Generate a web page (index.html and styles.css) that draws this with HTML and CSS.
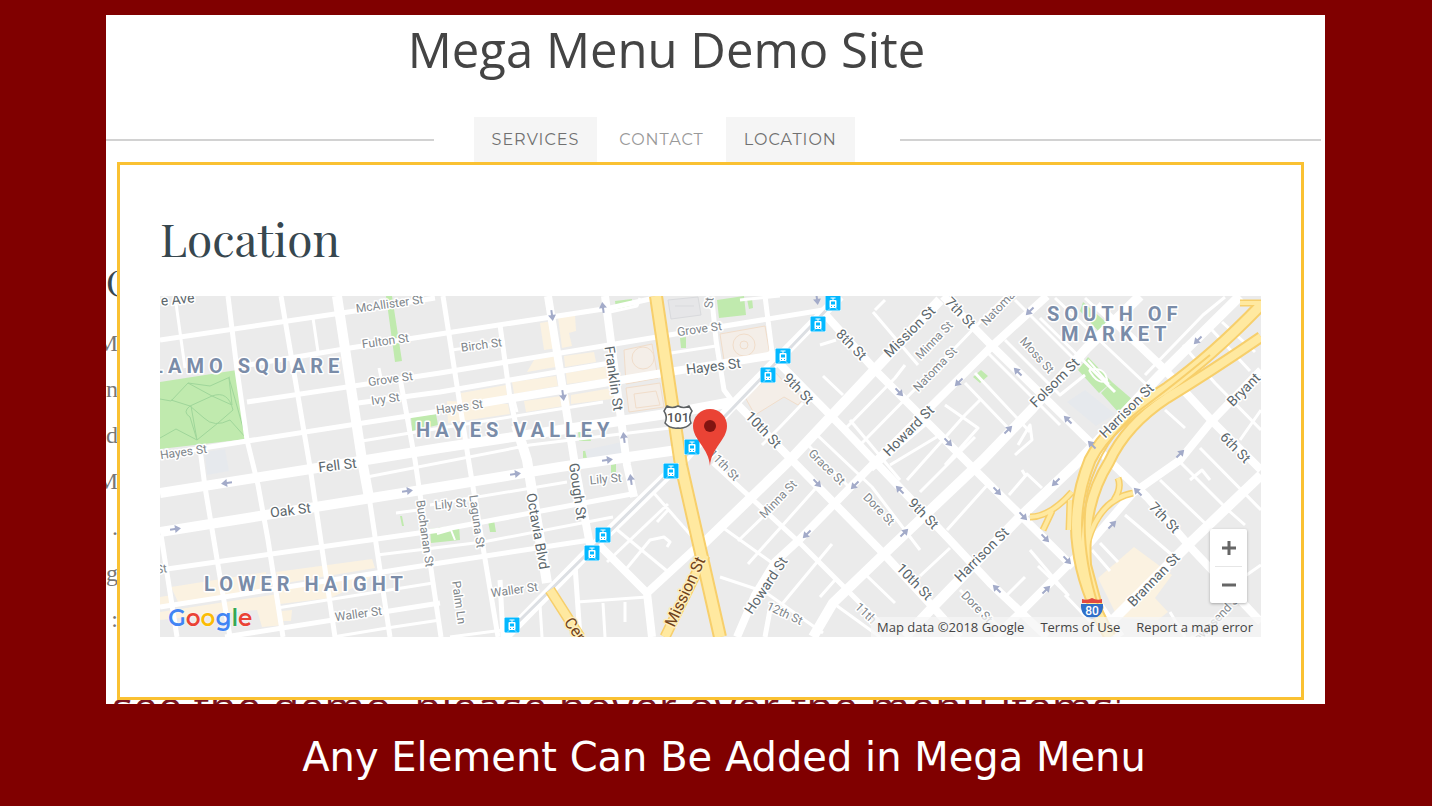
FILE: index.html
```html
<!DOCTYPE html>
<html lang="en">
<head>
    <meta charset="UTF-8">
    <meta name="viewport" content="width=device-width, initial-scale=1.0">
    <title>Mega Menu Demo Site</title>
    <link rel="stylesheet" href="styles.css">
</head>
<body>
    <div class="site">
        <header class="site-header">
            <h1 class="site-title">Mega Menu Demo Site</h1>
            <div class="nav-row">
                <span class="nav-line nav-line-left"></span>
                <nav class="nav">
                    <a href="#" class="nav-link active">SERVICES</a>
                    <a href="#" class="nav-link">CONTACT</a>
                    <a href="#" class="nav-link active">LOCATION</a>
                </nav>
                <span class="nav-line nav-line-right"></span>
            </div>
        </header>
        <main class="page-content">
            <div class="side-text">
                <h3>C</h3>
                <p>M</p>
                <p>n</p>
                <p>d</p>
                <p>M</p>
                <p>.</p>
                <p>g</p>
                <p>e :</p>
            </div>
            <p class="hint">see the demo, please hover over the menu items'</p>
        </main>
        <section class="mega-menu">
            <h2 class="mega-title">Location</h2>
            <div class="map">
                <svg class="map-canvas" viewBox="160 296 1101 341" role="img" aria-label="Map">
                    <defs>
                        <g id="tram">
                            <rect x="-8" y="-8" width="16" height="16" rx="1" fill="#fff"/>
                            <rect x="-7.5" y="-7.5" width="15" height="15" rx="1" fill="#03b8ff"/>
                            <path d="M-2.5 -5H2.5M0 -5V-3" stroke="#fff" fill="none"/>
                            <rect x="-3.5" y="-3" width="7" height="8" rx="1" fill="#fff"/>
                            <rect x="-2" y="-1.5" width="4" height="3" fill="#03b8ff"/>
                            <path d="M-2 3.5H-1M1 3.5H2" stroke="#03b8ff"/>
                            <path d="M-3 5.5L-4 6.5M3 5.5L4 6.5" stroke="#fff"/>
                        </g>
                        <path id="arrow" d="M-5 -1H0V-4L6 0L0 4V1H-5Z" fill="#a3abc9"/>
                    </defs>

                    <rect x="160" y="296" width="1101" height="341" fill="#ebebeb"/>

                    <!-- shops, parks and public buildings -->
                    <g fill="#fbf2e1">
                        <path d="M171 587L266 572L266 592L179 604ZM160 597L172 595V606L160 608ZM160 612L278 594L284 625L262 627L257 610L160 620Z"/>
                        <path d="M276 572L372 559L375 568L280 584ZM279 589L373 574L366 582L330 598L280 604ZM282 611L292 610L291 621L282 621Z"/>
                        <path d="M540 323L552 321L557 348L544 350ZM558 317L575 315L576 331L569 333L572 346L562 348Z"/>
                        <path d="M534 360L554 356L556 367L527 372ZM564 356L594 352L596 362L565 367ZM566 373L610 366L612 378L567 384ZM512 382L556 376L558 386L514 394ZM461 393L506 385L507 395L462 405ZM571 395L618 387L620 398L571 404ZM524 401L569 395L570 405L526 412ZM447 401L508 404L510 414L448 423Z"/>
                        <path d="M1134 547L1172 575L1155 598L1168 612L1158 620L1118 618L1098 578Z"/>
                    </g>
                    <g fill="#f4eee8" stroke="#f1ddca">
                        <path d="M624 350L652 344L658 378L626 384ZM626 388L660 383L664 407L629 412ZM634 394L656 391L660 405L636 408Z"/>
                        <circle cx="643" cy="358" r="11"/>
                        <path d="M720 334L765 326L770 355L724 360ZM745 397L775 372L784 382L796 391L803 399L798 405L784 397L755 415Z"/>
                        <circle cx="744" cy="345" r="11" fill="none"/>
                        <circle cx="744" cy="345" r="4" fill="none"/>
                    </g>
                    <path d="M668 300L698 297L701 315L671 319ZM675 306H694" fill="#e6e6e8" stroke="#d9dadd"/>
                    <g fill="#c0eaae">
                        <path d="M160 382L237 370L247 439L160 449Z"/>
                        <path d="M386 296L392 296L402 361L395 362ZM411 417L436 414L438 425L412 431ZM615 301L632 299L631 308L616 309ZM680 338L686 337L686 348L681 348ZM717 300L744 296L746 315L719 318ZM747 299L752 298L753 308L749 309Z"/>
                        <path d="M578 431L588 430L591 441L579 441ZM583 451L600 450L600 457L583 458ZM400 516H402L404 526H402ZM430 529L459 525L460 540L431 543ZM488 521L494 520L496 532L490 532ZM611 465L616 464V472L611 473Z"/>
                        <path d="M973 377L981 370L988 376L980 383ZM1083 302L1107 323L1100 333L1080 311ZM1078 370L1088 357L1112 382L1099 393ZM1101 393L1112 382L1133 400L1119 413Z"/>
                    </g>
                    <g fill="#e6e9ed">
                        <path d="M205 452L225 449L229 471L207 475ZM585 450L622 442L624 460L588 463ZM1067 402L1085 390L1115 414L1096 426Z"/>
                    </g>
                    <path class="trail" d="M160 399L171 401L188 383L212 396L232 405L229 378L246 438L230 420Q214 428 204 418L190 406L171 400M188 383L210 386L230 377M190 406Q182 412 190 417L197 440L176 429L160 438M191 406L197 440L218 423L233 410Q228 390 212 396L190 406"/>
                    <path d="M1088 360L1109 384M1089 370Q1105 366 1107 380Q1098 386 1089 370M437 534L451 530L455 540" stroke="#fff" stroke-width="2" fill="none"/>

                    <!-- side streets -->
                    <g class="street street-s">
                        <path d="M175 296L185 368M313 318L318 352M452 350L505 342M379 368L381 378M514 400L517 412"/>
                        <path d="M362 441L410 433L603 402M367 477L530 445L670 428M430 505L567 482M396 513L418 510M377 555L483 542L613 517M277 608L433 583M333 637L387 628L440 620M450 637L503 630"/>
                        <path d="M610 312L637 306L640 298M820 345L836 340M671 353L716 346"/>
                        <path d="M615 528L667 571M607 562L668 504M627 568L650 540L664 537L670 542L667 547M653 492L695 540M668 510L657 522M577 602L647 597M603 603L605 637M625 602V622M540 605L542 637"/>
                        <path d="M722 527L775 565M748 564L815 489M738 541L770 510M720 577L765 592L823 633M783 603L832 544M820 597L835 580M866 575L895 603M833 603L880 637"/>
                        <path d="M762 445L780 427L803 403M844 430L895 378L905 365M862 443L924 380L980 322L1005 297M823 376L843 395M873 312L918 365M885 300L875 310M808 445L848 486M850 420L900 480M872 470L925 425M815 433L872 487L920 550"/>
                        <path d="M890 465L940 435M907 480L965 415L980 400M920 492L975 437M945 405L978 428L945 465M947 530L990 482M920 576L950 548M965 383L1010 430M975 373L1030 432M1005 340L1060 395L1085 375"/>
                        <path d="M985 350L1060 425M1015 300L1080 365M1040 318L1115 392M1055 298L1150 388M1085 298L1157 365M1145 375L1203 315L1225 297M1212 330L1250 371M1222 322L1255 352M1183 345L1200 365M1195 360L1215 383L1261 430"/>
                        <path d="M1009 495L1027 474L1042 488M1022 470L1025 475M1007 595L1025 577M1038 566L1068 595L1030 550M1092 550L1110 571M1100 543L1118 562M1125 515L1178 560M1160 480L1208 526M1178 460L1228 510L1245 525M1190 480L1202 470L1210 480M1200 448L1261 510M1165 410L1185 428M1015 455L1032 440L1030 425L1018 445"/>
                        <path d="M1065 595L1105 637M1170 612L1185 637M1225 590L1261 565M960 590L1010 637M1240 440L1261 410M780 296L740 300"/>
                    </g>
                    <g class="street street-m">
                        <path d="M161 535L177 637M200 449L205 487L225 607L230 637M228 296L237 370L247 440L258 485L268 540L283 637M281 296L310 467L335 637M370 503L390 637M400 378L415 460L437 610L441 637M443 296L469 463L498 637M500 325L510 398L516 425"/>
                        <path d="M160 340L355 311L435 298M236 367L350 348L440 334L610 308L650 299M247 402L440 373L657 337M358 403L440 392L610 363M160 455L247 441L440 411M160 570L440 530L637 493M160 607L440 563L590 540M225 637L440 603"/>
                        <path d="M575 565L580 637M713 463L800 543L847 590L890 633M765 296L773 360M712 300L716 340L724 390L733 402M657 337L823 310M500 580L503 637M770 610L765 637"/>
                    </g>
                    <g class="street street-l">
                        <path d="M548 296L575 465L590 545M605 296L627 465L634 497M483 403L663 373L775 355M597 543L647 593L697 547M647 593L652 637"/>
                        <path d="M823 312L877 372L970 465L1073 567M943 296L993 347L1090 442L1147 497L1193 550L1261 622M1097 305L1163 368L1213 422L1261 470M768 352L843 428L947 537L990 583L1047 637M735 402L787 455L883 553L933 607L960 637"/>
                        <path d="M737 637L755 595L775 562L799 540L877 460L990 348L1047 296M995 637L1023 610L1090 543L1133 493L1180 460L1210 423L1261 370"/>
                    </g>
                    <g class="street street-xl">
                        <path d="M337 296L362 460L370 503M516 425L527 460L547 583M160 493L317 468L440 448L673 413L732 402M160 532L440 487L560 467L677 450"/>
                        <path d="M702 545L790 460L940 300M813 637L833 603L885 553L983 460L1033 408L1087 348L1140 296M905 637L933 607L1020 517L1080 460L1160 375L1240 296M1105 628L1193 540L1261 475M1088 590L1120 637"/>
                        <path d="M505 637L590 550L683 460L730 408L840 296"/>
                    </g>
                    <path class="rail" d="M515 625L671 471L730 411L833 303"/>

                    <!-- highways -->
                    <g class="highway-edge">
                        <path d="M656 296L681 465L720 637" stroke-width="14"/>
                        <path d="M705 555L665 637M550 590L580 637" stroke-width="11"/>
                        <path d="M1261 305Q1213 355 1167 388Q1108 424 1090 460Q1072 505 1078 547Q1083 590 1110 637" stroke-width="13"/>
                        <path d="M1261 337Q1210 372 1167 398Q1126 425 1109 462Q1082 505 1086 565L1098 610" stroke-width="12"/>
                        <path d="M1240 303H1261M1030 517Q1050 517 1072 492M1043 530L1052 511M1133 493Q1098 500 1087 545M1118 478Q1122 488 1114 500M1070 500L1069 530" stroke-width="7"/>
                    </g>
                    <g class="highway">
                        <path d="M656 296L681 465L720 637" stroke-width="10"/>
                        <path d="M705 555L665 637M550 590L580 637" stroke-width="8"/>
                        <path d="M1261 305Q1213 355 1167 388Q1108 424 1090 460Q1072 505 1078 547Q1083 590 1110 637" stroke-width="9"/>
                        <path d="M1261 337Q1210 372 1167 398Q1126 425 1109 462Q1082 505 1086 565L1098 610" stroke-width="8"/>
                        <path d="M1240 303H1261M1030 517Q1050 517 1072 492M1043 530L1052 511M1133 493Q1098 500 1087 545M1118 478Q1122 488 1114 500M1070 500L1069 530" stroke-width="4"/>
                    </g>
                    <path class="median" d="M1210 355Q1170 388 1140 410Q1103 438 1088 490Q1078 540 1098 605"/>

                    <!-- one way arrows -->
                    <use href="#arrow" transform="translate(227 483) rotate(172)"/>
                    <use href="#arrow" transform="translate(175 529) rotate(-8)"/>
                    <use href="#arrow" transform="translate(407 491) rotate(-8)"/>
                    <use href="#arrow" transform="translate(515 474) rotate(-8)"/>
                    <use href="#arrow" transform="translate(607 460) rotate(-8)"/>
                    <use href="#arrow" transform="translate(552 315) rotate(82)"/>
                    <use href="#arrow" transform="translate(563 395) rotate(82)"/>
                    <use href="#arrow" transform="translate(817 299) rotate(82)"/>
                    <use href="#arrow" transform="translate(603 308) rotate(-98)"/>
                    <use href="#arrow" transform="translate(624 438) rotate(-98)"/>
                    <use href="#arrow" transform="translate(631 480) rotate(-98)"/>
                    <use href="#arrow" transform="translate(899 392) rotate(46)"/>
                    <use href="#arrow" transform="translate(948 442) rotate(46)"/>
                    <use href="#arrow" transform="translate(817 483) rotate(46)"/>
                    <use href="#arrow" transform="translate(997 491) rotate(46)"/>
                    <use href="#arrow" transform="translate(1023 516) rotate(46)"/>
                    <use href="#arrow" transform="translate(1045 538) rotate(46)"/>
                    <use href="#arrow" transform="translate(1067 560) rotate(46)"/>
                    <use href="#arrow" transform="translate(959 382) rotate(135)"/>
                    <use href="#arrow" transform="translate(855 485) rotate(135)"/>
                    <use href="#arrow" transform="translate(807 534) rotate(135)"/>
                    <use href="#arrow" transform="translate(1030 311) rotate(135)"/>
                    <use href="#arrow" transform="translate(1198 340) rotate(135)"/>
                    <use href="#arrow" transform="translate(1056 482) rotate(135)"/>
                    <use href="#arrow" transform="translate(900 490) rotate(-135)"/>
                    <use href="#arrow" transform="translate(1018 372) rotate(-135)"/>
                    <use href="#arrow" transform="translate(1068 420) rotate(-135)"/>
                    <use href="#arrow" transform="translate(1092 445) rotate(-135)"/>
                    <use href="#arrow" transform="translate(1138 492) rotate(-135)"/>
                    <use href="#arrow" transform="translate(997 589) rotate(-135)"/>
                    <use href="#arrow" transform="translate(904 533) rotate(-45)"/>
                    <use href="#arrow" transform="translate(1008 430) rotate(-45)"/>
                    <use href="#arrow" transform="translate(1180 454) rotate(-45)"/>
                    <use href="#arrow" transform="translate(1112 525) rotate(-45)"/>
                    <use href="#arrow" transform="translate(1046 590) rotate(-45)"/>

                    <!-- street names -->
                    <g class="label label-minor">
                        <text transform="translate(390 308) rotate(-8)">McAllister St</text>
                        <text transform="translate(386 345) rotate(-8)">Fulton St</text>
                        <text transform="translate(391 383) rotate(-8)">Grove St</text>
                        <text transform="translate(386 403) rotate(-8)">Ivy St</text>
                        <text transform="translate(460 411) rotate(-8)">Hayes St</text>
                        <text transform="translate(482 349) rotate(-8)">Birch St</text>
                        <text transform="translate(184 456) rotate(-8)">Hayes St</text>
                        <text transform="translate(700 333) rotate(-8)">Grove St</text>
                        <text transform="translate(451 508) rotate(-5)">Lily St</text>
                        <text transform="translate(606 483) rotate(-5)">Lily St</text>
                        <text transform="translate(359 618) rotate(-8)">Waller St</text>
                        <text transform="translate(515 594) rotate(-8)">Waller St</text>
                        <text transform="translate(162 573) rotate(-8)">St</text>
                        <text transform="translate(421 534) rotate(82)">Buchanan St</text>
                        <text transform="translate(473 522) rotate(82)">Laguna St</text>
                        <text transform="translate(455 603) rotate(82)">Palm Ln</text>
                        <text transform="translate(713 303) rotate(-85)">St</text>
                        <text transform="translate(937 343) rotate(-46)">Minna St</text>
                        <text transform="translate(938 372) rotate(-46)">Natoma St</text>
                        <text transform="translate(1001 311) rotate(-46)">Natoma</text>
                        <text transform="translate(781 502) rotate(-46)">Minna St</text>
                        <text transform="translate(721 468) rotate(46)">11th St</text>
                        <text transform="translate(824 470) rotate(44)">Grace St</text>
                        <text transform="translate(876 512) rotate(46)">Dore St</text>
                        <text transform="translate(1034 358) rotate(48)">Moss St</text>
                        <text transform="translate(783 617) rotate(25)">12th St</text>
                        <text transform="translate(863 616) rotate(44)">11th</text>
                        <text transform="translate(974 610) rotate(46)">Dore St</text>
                        <text transform="translate(1218 623) rotate(-46)">Townsend St</text>
                    </g>
                    <g class="label label-major">
                        <text transform="translate(178 304) rotate(-6)">e Ave</text>
                        <text transform="translate(338 470) rotate(-7)">Fell St</text>
                        <text transform="translate(291 515) rotate(-7)">Oak St</text>
                        <text transform="translate(714 371) rotate(-7)">Hayes St</text>
                        <text transform="translate(609 379) rotate(82)">Franklin St</text>
                        <text transform="translate(573 492) rotate(82)">Gough St</text>
                        <text transform="translate(533 532) rotate(80)">Octavia Blvd</text>
                        <text transform="translate(848 348) rotate(46)">8th St</text>
                        <text transform="translate(795 392) rotate(46)">9th St</text>
                        <text transform="translate(760 433) rotate(46)">10th St</text>
                        <text transform="translate(957 316) rotate(46)">7th St</text>
                        <text transform="translate(913 335) rotate(-45)">Mission St</text>
                        <text transform="translate(912 434) rotate(-45)">Howard St</text>
                        <text transform="translate(770 588) rotate(-56)">Howard St</text>
                        <text transform="translate(920 517) rotate(46)">9th St</text>
                        <text transform="translate(911 585) rotate(46)">10th St</text>
                        <text transform="translate(985 558) rotate(-45)">Harrison St</text>
                        <text transform="translate(1130 414) rotate(-45)">Harrison St</text>
                        <text transform="translate(1058 386) rotate(-45)">Folsom St</text>
                        <text transform="translate(1247 393) rotate(-45)">Bryant</text>
                        <text transform="translate(1232 451) rotate(46)">6th St</text>
                        <text transform="translate(1161 521) rotate(46)">7th St</text>
                        <text transform="translate(1157 583) rotate(-46)">Brannan St</text>
                    </g>
                    <g class="label label-highway">
                        <text transform="translate(690 594) rotate(-65)">Mission St</text>
                        <text transform="translate(578 643) rotate(55)">Central</text>
                    </g>
                    <g class="label label-area">
                        <text x="152" y="373">LAMO SQUARE</text>
                        <text x="416" y="437">HAYES VALLEY</text>
                        <text x="204" y="591">LOWER HAIGHT</text>
                        <text x="1047" y="321">SOUTH OF</text>
                        <text x="1061" y="341">MARKET</text>
                    </g>

                    <!-- stations, shields and marker -->
                    <use href="#tram" x="833" y="303"/>
                    <use href="#tram" x="818" y="324"/>
                    <use href="#tram" x="783" y="356"/>
                    <use href="#tram" x="768" y="375"/>
                    <use href="#tram" x="692" y="447"/>
                    <use href="#tram" x="671" y="471"/>
                    <use href="#tram" x="603" y="535"/>
                    <use href="#tram" x="592" y="553"/>
                    <use href="#tram" x="512" y="625"/>
                    <path d="M667 406Q672 409 678 406Q684 409 689 406L692 411Q688 417 691 423Q686 429 678 428Q670 429 665 423Q668 417 664 411Z" fill="#fff" stroke="#5d6163" stroke-width="1.5"/>
                    <text x="678" y="422" class="shield shield-us">101</text>
                    <path d="M1082 599Q1087 601 1092 598Q1097 601 1102 599V603H1082Z" fill="#e2493f"/>
                    <path d="M1081 604H1103Q1104 616 1092 619Q1080 616 1081 604Z" fill="#2f6fc9"/>
                    <text x="1092" y="615" class="shield shield-i">80</text>
                    <path d="M710 466C709 448 693 440 693 426A17 17 0 0 1 727 426C727 440 711 448 710 466Z" fill="#ea4335"/>
                    <circle cx="710" cy="426" r="6" fill="#811411"/>
                </svg>
                <a href="#" class="map-logo"><span class="blue">G</span><span class="red">o</span><span class="yellow">o</span><span class="blue">g</span><span class="green">l</span><span class="red">e</span></a>
                <div class="map-zoom">
                    <button type="button" class="zoom-btn" aria-label="Zoom in">
                        <svg width="16" height="16" viewBox="0 0 16 16"><path d="M1 8H15M8 1V15" stroke="#666" stroke-width="3"/></svg>
                    </button>
                    <button type="button" class="zoom-btn" aria-label="Zoom out">
                        <svg width="16" height="16" viewBox="0 0 16 16"><path d="M1 8H15" stroke="#666" stroke-width="3"/></svg>
                    </button>
                </div>
                <div class="map-credits">
                    <span>Map data ©2018 Google</span>
                    <a href="#">Terms of Use</a>
                    <a href="#">Report a map error</a>
                </div>
            </div>
        </section>
    </div>
    <p class="caption">Any Element Can Be Added in Mega Menu</p>
</body>
</html>
```

FILE: styles.css
```css
* {
    margin: 0;
    padding: 0;
    box-sizing: border-box;
}
body {
    background-color: #800000;
    font-family: 'Open Sans', sans-serif;
    padding-top: 15px;
}
a {
    color: inherit;
    text-decoration: none;
}
.site {
    position: relative;
    margin: 0 107px 0 106px;
    background-color: #fff;
    overflow: hidden;
}
.site-title {
    height: 102px;
    padding-right: 98px;
    font-size: 49px;
    line-height: 68px;
    font-weight: 400;
    text-align: center;
    color: #444;
}
.nav-row {
    display: flex;
    align-items: center;
    padding-right: 4px;
}
.nav-line {
    height: 2px;
    background-color: #d2d2d2;
}
.nav-line-left {
    flex: 7;
    margin-right: 40px;
}
.nav-line-right {
    flex: 9;
    margin-left: 45px;
}
.nav {
    display: flex;
    gap: 4px;
}
.nav-link {
    padding: 0 18px;
    font-family: 'Montserrat', 'Inter', sans-serif;
    font-size: 16px;
    line-height: 45px;
    letter-spacing: 1px;
    color: #999;
}
.nav-link.active {
    background-color: #f5f5f5;
    color: #707070;
}
/* page behind the open menu */
.page-content {
    height: 542px;
    padding-top: 96px;
    overflow: hidden;
}
.side-text {
    display: flex;
    flex-direction: column;
    align-items: flex-end;
    width: 12px;
    font-family: 'Liberation Serif', serif;
    color: #37474f;
}
.side-text h3 {
    align-self: flex-start;
    margin-bottom: 16px;
    font-family: 'Playfair Display', 'Liberation Serif', serif;
    font-size: 36px;
    line-height: 46px;
    font-weight: 400;
}
.side-text p {
    font-size: 24px;
    line-height: 46px;
    white-space: nowrap;
    color: #777;
}
.hint {
    margin-top: 34px;
    padding-left: 6px;
    font-size: 44px;
    line-height: 60px;
    white-space: nowrap;
    color: #7b1420;
}
.mega-menu {
    position: absolute;
    top: 147px;
    left: 11px;
    right: 21px;
    padding: 43px 40px 60px;
    background-color: #fff;
    border: 3px solid #fac132;
}
.mega-title {
    font-family: 'Playfair Display', 'Liberation Serif', serif;
    font-size: 46px;
    line-height: 60px;
    margin-bottom: 28px;
    font-weight: 400;
    color: #37474f;
}
.map {
    position: relative;
    font-family: 'Roboto', sans-serif;
}
.map-canvas {
    display: block;
    width: 100%;
}
.street {
    fill: none;
    stroke: #fff;
    stroke-linejoin: round;
}
.street-s {
    stroke-width: 3px;
}
.street-m {
    stroke-width: 5px;
}
.street-l {
    stroke-width: 8px;
}
.street-xl {
    stroke-width: 10px;
}
.trail {
    fill: none;
    stroke: #9fd69a;
}
.rail {
    fill: none;
    stroke: #dcdfe3;
    stroke-width: 3px;
}
.highway-edge {
    fill: none;
    stroke: #f7cf6b;
}
.highway {
    fill: none;
    stroke: #ffe9a0;
}
.median {
    fill: none;
    stroke: #f7cf6b;
    stroke-width: 2px;
}
.label {
    text-anchor: middle;
    stroke: #fff;
    stroke-width: 3px;
    stroke-linejoin: round;
    paint-order: stroke;
}
.label-minor {
    font-size: 12px;
    fill: #80868b;
}
.label-major {
    font-size: 14px;
    fill: #5b666b;
}
.label-highway {
    font-size: 16px;
    fill: #70421a;
    stroke: #ffeebb;
}
.label-area {
    font-size: 20px;
    font-weight: 700;
    letter-spacing: 5px;
    text-anchor: start;
    fill: #7a8ca8;
}
.shield {
    text-anchor: middle;
    font-weight: 500;
}
.shield-us {
    font-size: 13px;
    fill: #555;
}
.shield-i {
    font-size: 12px;
    fill: #fff;
}
.map-logo {
    position: absolute;
    left: 8px;
    bottom: 3px;
    font-family: 'Montserrat', 'Open Sans', sans-serif;
    font-size: 23px;
    line-height: 32px;
    font-weight: 600;
    text-shadow: 0 0 2px #fff;
}
.blue {
    color: #4285f4;
}
.red {
    color: #ea4335;
}
.yellow {
    color: #fbbc05;
}
.green {
    color: #34a853;
}
.map-zoom {
    position: absolute;
    right: 14px;
    bottom: 34px;
    width: 37px;
    padding: 0 5px;
    background-color: #fff;
    border-radius: 2px;
    box-shadow: 0 1px 3px rgba(0, 0, 0, 0.3);
}
.zoom-btn {
    display: flex;
    align-items: center;
    justify-content: center;
    width: 100%;
    height: 37px;
    border: 0;
    background-color: transparent;
    cursor: pointer;
}
.zoom-btn + .zoom-btn {
    border-top: 1px solid #e6e6e6;
}
.map-credits {
    position: absolute;
    right: 0;
    bottom: 0;
    display: flex;
    gap: 16px;
    padding: 0 8px 0 6px;
    background-color: rgba(245, 245, 245, 0.75);
    font-family: 'Open Sans', 'Roboto', sans-serif;
    font-size: 13px;
    line-height: 20px;
    color: #444;
}
.caption {
    padding: 29px 0 23px 16px;
    font-family: 'Verdana', 'DejaVu Sans', sans-serif;
    font-size: 40px;
    line-height: 48px;
    text-align: center;
    color: #fff;
}
```
